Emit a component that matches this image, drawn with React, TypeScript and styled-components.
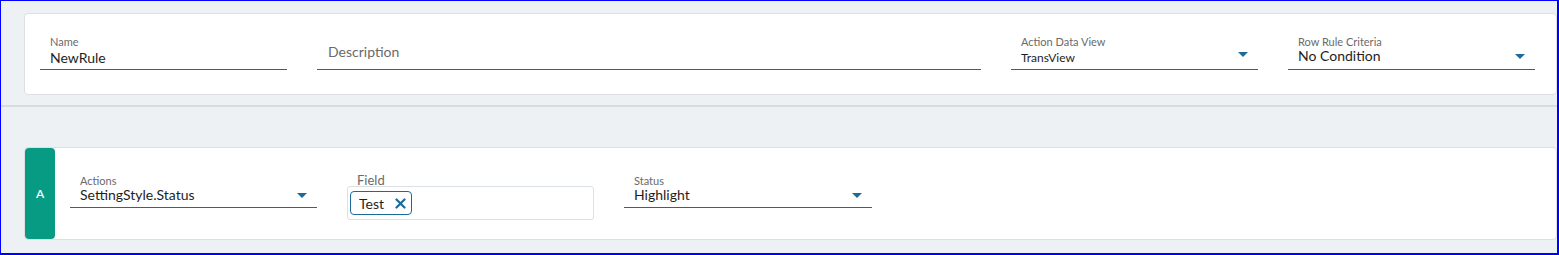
import React from "react";
import styled, { createGlobalStyle } from "styled-components";

const Global = createGlobalStyle`
  html, body { margin: 0; padding: 0; background: #ffffff; }
  * { box-sizing: border-box; }
`;

const Frame = styled.div`
  width: 1559px;
  height: 255px;
  border-style: solid;
  border-color: #0000ff;
  border-width: 1px 2px 2px 1px;
  background: #eef1f4;
  overflow: hidden;
  font-family: Lato, "Open Sans", sans-serif;
  color: #1e1e1e;
`;

const TopSection = styled.section`
  height: 106px;
  padding: 12px 0 0 23px;
  border-bottom: 2px solid #d5dde2;
`;

const BottomSection = styled.section`
  padding: 40px 0 0 23px;
`;

const Card = styled.div<{ $h: number }>`
  height: ${(p) => p.$h}px;
  background: #ffffff;
  border: 1px solid #dcdfe3;
  border-radius: 4px;
  display: flex;
  align-items: stretch;
`;

const FieldRow = styled.div<{ $top: number; $left: number; $gap: number }>`
  display: flex;
  align-items: flex-start;
  gap: ${(p) => p.$gap}px;
  padding: ${(p) => p.$top}px 0 0 ${(p) => p.$left}px;
`;

const Field = styled.div<{ $w: number }>`
  width: ${(p) => p.$w}px;
  display: flex;
  flex-direction: column;
  border-bottom: 1px solid #1a6a9c;
  padding-left: 10px;
`;

const Label = styled.div<{ $gap: number }>`
  font-size: 11px;
  line-height: 13px;
  color: #6a6a6a;
  margin-bottom: ${(p) => p.$gap}px;
  white-space: nowrap;
`;

const ValueRow = styled.div<{ $pb: number }>`
  display: flex;
  align-items: center;
  justify-content: space-between;
  padding-right: 10px;
  padding-bottom: ${(p) => p.$pb}px;
`;

const Value = styled.span<{ $size?: number }>`
  font-size: ${(p) => p.$size ?? 14}px;
  line-height: 18px;
  color: #1e1e1e;
  white-space: nowrap;
`;

const Placeholder = styled.div`
  font-size: 14px;
  line-height: 18px;
  color: #6a6a6a;
`;

const Caret = styled.span<{ $lift?: number }>`
  width: 0;
  height: 0;
  border-left: 5px solid transparent;
  border-right: 5px solid transparent;
  border-top: 5px solid #1a6a9c;
  margin-top: ${(p) => -(p.$lift ?? 0)}px;
`;

const DescField = styled.div<{ $w: number; $mt: number }>`
  width: ${(p) => p.$w}px;
  margin-top: ${(p) => p.$mt}px;
  padding: 0 0 8px 11px;
  border-bottom: 1px solid #1a6a9c;
`;

const Tab = styled.div`
  width: 30px;
  flex: none;
  background: #079b84;
  border-radius: 4px;
  color: #ffffff;
  font-size: 12px;
  font-weight: 600;
  display: flex;
  align-items: center;
  justify-content: center;
`;

const MultiField = styled.div<{ $w: number }>`
  width: ${(p) => p.$w}px;
  display: flex;
  flex-direction: column;
`;

const MultiLabel = styled.div`
  font-size: 13px;
  line-height: 14px;
  color: #6a6a6a;
  padding-left: 10px;
  margin-top: -1px;
  margin-bottom: -1px;
`;

const MultiBox = styled.div`
  height: 34px;
  border: 1px solid #dbe0e5;
  border-radius: 3px;
  padding: 4px 2px;
  display: flex;
  align-items: flex-start;
`;

const Chip = styled.div`
  height: 24px;
  width: 62px;
  border: 1px solid #1a6a9c;
  border-radius: 4px;
  display: flex;
  align-items: center;
  justify-content: space-between;
  padding: 0 5px 0 8px;
  font-size: 14px;
  color: #1e1e1e;
`;

const XIcon = () => (
  <svg width="11" height="11" viewBox="0 0 11 11">
    <path d="M1.5 1.5 L9.5 9.5 M9.5 1.5 L1.5 9.5" stroke="#1a6a9c" strokeWidth="2.2" strokeLinecap="round" />
  </svg>
);

export default function App() {
  return (
    <>
      <Global />
      <Frame>
        <TopSection>
          <Card $h={82}>
            <FieldRow $top={21} $left={15} $gap={30}>
              <Field $w={247}>
                <Label $gap={1}>Name</Label>
                <ValueRow $pb={2}>
                  <Value>NewRule</Value>
                </ValueRow>
              </Field>
              <DescField $w={664} $mt={8}>
                <Placeholder>Description</Placeholder>
              </DescField>
              <Field $w={247}>
                <Label $gap={1}>Action Data View</Label>
                <ValueRow $pb={2}>
                  <Value $size={12}>TransView</Value>
                  <Caret $lift={8} />
                </ValueRow>
              </Field>
              <Field $w={247}>
                <Label $gap={-1}>Row Rule Criteria</Label>
                <ValueRow $pb={4}>
                  <Value>No Condition</Value>
                  <Caret />
                </ValueRow>
              </Field>
            </FieldRow>
          </Card>
        </TopSection>
        <BottomSection>
          <Card $h={93}>
            <Tab>A</Tab>
            <FieldRow $top={26} $left={15} $gap={30}>
              <Field $w={247}>
                <Label $gap={-1}>Actions</Label>
                <ValueRow $pb={3}>
                  <Value>SettingStyle.Status</Value>
                  <Caret />
                </ValueRow>
              </Field>
              <MultiField $w={247}>
                <MultiLabel>Field</MultiLabel>
                <MultiBox>
                  <Chip>
                    <span>Test</span>
                    <XIcon />
                  </Chip>
                </MultiBox>
              </MultiField>
              <Field $w={248}>
                <Label $gap={-1}>Status</Label>
                <ValueRow $pb={3}>
                  <Value>Highlight</Value>
                  <Caret />
                </ValueRow>
              </Field>
            </FieldRow>
          </Card>
        </BottomSection>
      </Frame>
    </>
  );
}
